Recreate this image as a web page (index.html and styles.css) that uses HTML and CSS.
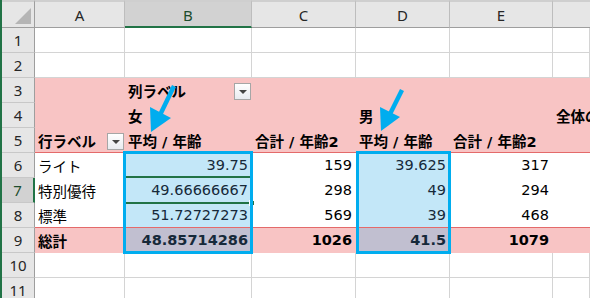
FILE: index.html
```html
<!DOCTYPE html>
<html lang="ja">
<head>
<meta charset="utf-8">
<link rel="stylesheet" href="styles.css">
</head>
<body>
<div class="sheet">
  <div class="grid">
    <!-- header row -->
    <div class="corner"><span class="tri"></span></div>
    <div class="ch">A</div>
    <div class="ch sel">B</div>
    <div class="ch">C</div>
    <div class="ch">D</div>
    <div class="ch">E</div>
    <div class="ch last"></div>

    <!-- row 1 -->
    <div class="rh">1</div>
    <div class="c"></div><div class="c"></div><div class="c"></div><div class="c"></div><div class="c"></div><div class="c"></div>
    <!-- row 2 -->
    <div class="rh">2</div>
    <div class="c"></div><div class="c"></div><div class="c"></div><div class="c"></div><div class="c"></div><div class="c"></div>

    <!-- row 3 -->
    <div class="rh">3</div>
    <div class="p"></div>
    <div class="p b spread">列ラベル<span class="dd"></span></div>
    <div class="p"></div><div class="p"></div><div class="p"></div><div class="p"></div>
    <!-- row 4 -->
    <div class="rh">4</div>
    <div class="p"></div>
    <div class="p b">女</div>
    <div class="p"></div>
    <div class="p b">男</div>
    <div class="p"></div>
    <div class="p b clip">全体の平均 / 年齢</div>
    <!-- row 5 -->
    <div class="rh">5</div>
    <div class="p ph b spread">行ラベル<span class="dd"></span></div>
    <div class="p ph b">平均 / 年齢</div>
    <div class="p ph b">合計 / 年齢2</div>
    <div class="p ph b">平均 / 年齢</div>
    <div class="p ph b">合計 / 年齢2</div>
    <div class="p ph b clip"></div>

    <!-- row 6 -->
    <div class="rh">6</div>
    <div class="w">ライト</div>
    <div class="w hl num">39.75</div>
    <div class="w num">159</div>
    <div class="w hl num">39.625</div>
    <div class="w num">317</div>
    <div class="w"></div>
    <!-- row 7 -->
    <div class="rh sel">7</div>
    <div class="w">特別優待</div>
    <div class="w hl num">49.66666667</div>
    <div class="w num">298</div>
    <div class="w hl num">49</div>
    <div class="w num">294</div>
    <div class="w"></div>
    <!-- row 8 -->
    <div class="rh">8</div>
    <div class="w pt">標準</div>
    <div class="w pt hl num">51.72727273</div>
    <div class="w pt num">569</div>
    <div class="w pt hl num">39</div>
    <div class="w pt num">468</div>
    <div class="w pt"></div>

    <!-- row 9 -->
    <div class="rh">9</div>
    <div class="p b">総計</div>
    <div class="p b hl2 num">48.85714286</div>
    <div class="p b num">1026</div>
    <div class="p b hl2 num">41.5</div>
    <div class="p b num">1079</div>
    <div class="p"></div>

    <!-- row 10 -->
    <div class="rh">10</div>
    <div class="c"></div><div class="c"></div><div class="c"></div><div class="c"></div><div class="c"></div><div class="c"></div>
    <!-- row 11 -->
    <div class="rh">11</div>
    <div class="c"></div><div class="c"></div><div class="c"></div><div class="c"></div><div class="c"></div><div class="c"></div>
  </div>

  <div class="active"><span class="handle"></span></div>
  <div class="box box-b"></div>
  <div class="box box-d"></div>

  <svg class="arrows" width="590" height="298" viewBox="0 0 590 298">
    <line x1="174" y1="86" x2="160" y2="115" stroke="#00adef" stroke-width="4.5"/>
    <polygon points="151,132 150,107 171,118" fill="#00adef"/>
    <line x1="402" y1="90" x2="390" y2="114" stroke="#00adef" stroke-width="4.5"/>
    <polygon points="381,131 380,107 400,117" fill="#00adef"/>
  </svg>
</div>
</body>
</html>
```

FILE: styles.css
```css
* { box-sizing: border-box; }

html, body {
  margin: 0;
  padding: 0;
  background: #ffffff;
  overflow: hidden;
}

.sheet {
  position: relative;
  width: 590px;
  height: 298px;
  overflow: hidden;
  border-left: 2px solid #217346;
  font-family: "DejaVu Sans", "Noto Sans CJK JP", sans-serif;
  font-size: 14.5px;
  color: #000;
}

.grid {
  display: grid;
  grid-template-columns: 33px 90px 127px 104px 94px 103px 1fr;
  grid-template-rows: 28px repeat(11, 25px);
}

.grid > div {
  display: flex;
  align-items: center;
  white-space: nowrap;
  min-width: 0;
}

.corner {
  background: #e6e6e6;
  border-top: 2px solid #cfcfcf;
  border-right: 1px solid #9e9e9e;
  border-bottom: 1px solid #9e9e9e;
  position: relative;
}

.tri {
  position: absolute;
  right: 3px;
  bottom: 3px;
  width: 0;
  height: 0;
  border-left: 16px solid transparent;
  border-bottom: 16px solid #b5b5b5;
}

.ch {
  background: #e6e6e6;
  border-top: 2px solid #cfcfcf;
  border-right: 1px solid #bdbdbd;
  border-bottom: 1px solid #9e9e9e;
  justify-content: center;
  font-family: "Noto Sans", "DejaVu Sans", sans-serif;
  font-size: 15px;
  color: #262626;
  padding-top: 1px;
}

.ch.sel {
  background: #d2d2d2;
  border-bottom: 2px solid #217346;
  color: #1d4d2d;
}

.ch.last { border-right: none; }

.rh {
  background: #e6e6e6;
  border-right: 1px solid #9e9e9e;
  border-bottom: 1px solid #c8c8c8;
  justify-content: center;
  font-family: "Noto Sans", "DejaVu Sans", sans-serif;
  font-size: 15px;
  color: #262626;
}

.rh.sel {
  background: #d2d2d2;
  border-right: 2px solid #217346;
  color: #1d4d2d;
}

.c {
  border-right: 1px solid #d4d4d4;
  border-bottom: 1px solid #d4d4d4;
}

.p {
  background: #f8c4c4;
  padding-left: 3px;
  border-bottom: 1px solid #f8c4c4;
}

.p.ph { border-bottom: 1px solid #e46a6a; }

.w {
  background: #ffffff;
  padding-left: 3px;
  border-bottom: 1px solid #ffffff;
}

.w.pt { border-bottom: 1px solid #e46a6a; }

.b { font-weight: bold; }

.num {
  justify-content: flex-end;
  padding-right: 4px;
}

.hl {
  background: #c3e7f8;
  border-bottom-color: #c3e7f8;
  color: #16293a;
}

.w.pt.hl { border-bottom-color: #e46a6a; }

.hl2 {
  background: #c1bfd0;
  border-bottom-color: #c1bfd0;
  color: #16293a;
}

.spread {
  justify-content: space-between;
  padding-right: 1px;
}

.clip { overflow: hidden; }

.dd {
  width: 17px;
  height: 17px;
  border: 1px solid #a6a6a6;
  background: linear-gradient(#ffffff, #e9ebf0);
  display: flex;
  align-items: center;
  justify-content: center;
  margin-top: 2px;
}

.dd::after {
  content: "";
  width: 0;
  height: 0;
  border-left: 4px solid transparent;
  border-right: 4px solid transparent;
  border-top: 4px solid #444;
  margin-top: 2px;
}

.active {
  position: absolute;
  left: 122px;
  top: 176px;
  width: 129px;
  height: 28px;
  border: 2px solid #217346;
}

.handle {
  position: absolute;
  right: -4px;
  bottom: -4px;
  width: 6px;
  height: 6px;
  background: #217346;
  border: 1px solid #ffffff;
}

.box {
  position: absolute;
  border: 3px solid #00adef;
}

.box-b {
  left: 121px;
  top: 151px;
  width: 130px;
  height: 103px;
}

.box-d {
  left: 354px;
  top: 151px;
  width: 95px;
  height: 103px;
}

.arrows {
  position: absolute;
  left: -2px;
  top: 0;
  pointer-events: none;
}
```
